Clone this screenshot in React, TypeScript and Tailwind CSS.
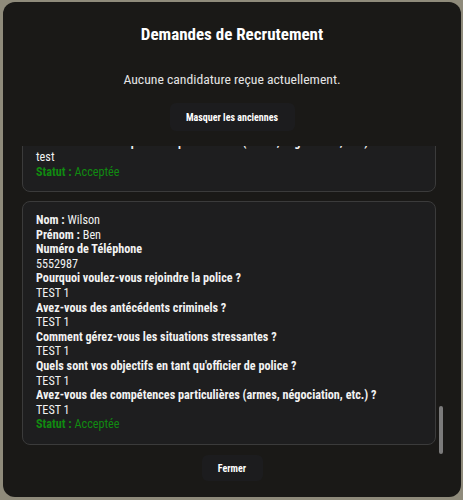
import React from "react";

interface Application {
  nom: string;
  prenom: string;
  telephone: string;
  answers: { question: string; answer: string }[];
  statut: string;
}

const applications: Application[] = [
  {
    nom: "test",
    prenom: "test",
    telephone: "555",
    answers: [
      { question: "Pourquoi voulez-vous rejoindre la police ?", answer: "test" },
      { question: "Avez-vous des antécédents criminels ?", answer: "test" },
      { question: "Comment gérez-vous les situations stressantes ?", answer: "test" },
      { question: "Quels sont vos objectifs en tant qu'officier de police ?", answer: "test" },
      { question: "Avez-vous des compétences particulières (armes, négociation, etc.) ?", answer: "test" },
    ],
    statut: "Acceptée",
  },
  {
    nom: "Wilson",
    prenom: "Ben",
    telephone: "5552987",
    answers: [
      { question: "Pourquoi voulez-vous rejoindre la police ?", answer: "TEST 1" },
      { question: "Avez-vous des antécédents criminels ?", answer: "TEST 1" },
      { question: "Comment gérez-vous les situations stressantes ?", answer: "TEST 1" },
      { question: "Quels sont vos objectifs en tant qu'officier de police ?", answer: "TEST 1" },
      { question: "Avez-vous des compétences particulières (armes, négociation, etc.) ?", answer: "TEST 1" },
    ],
    statut: "Acceptée",
  },
];

const ApplicationCard: React.FC<{ app: Application }> = ({ app }) => (
  <div className="shrink-0 rounded-lg border border-[#3b3b3b] bg-[#1e1e1f] px-[13px] pt-[11px] pb-[12px] text-[12.2px] leading-[14.6px] text-[#f2f2f2]">
    <p>
      <span className="font-bold">Nom :</span> {app.nom}
    </p>
    <p>
      <span className="font-bold">Prénom :</span> {app.prenom}
    </p>
    <p className="font-bold">Numéro de Téléphone</p>
    <p>{app.telephone}</p>
    {app.answers.map((a) => (
      <div key={a.question}>
        <p className="font-bold">{a.question}</p>
        <p>{a.answer}</p>
      </div>
    ))}
    <p className="text-[#118a11]">
      <span className="font-bold">Statut :</span> {app.statut}
    </p>
  </div>
);

export default function App() {
  return (
    <div
      className="h-[500px] w-[463px] bg-[#8f8b7b] p-[2px_2px_3px_3px] font-stretch-condensed"
      style={{ fontFamily: "Roboto, 'Liberation Sans', sans-serif" }}
    >
      <div className="flex h-full flex-col rounded-xl bg-[#1a1917] text-white">
        <h1 className="pt-[20px] text-center text-[17px] font-bold leading-[24px]">
          Demandes de Recrutement
        </h1>
        <p className="mt-[24px] text-center text-[13.7px] leading-[18px] text-[#e4e4e4]">
          Aucune candidature reçue actuellement.
        </p>
        <div className="mt-[15px] flex justify-center">
          <button className="h-[28px] w-[125px] rounded-md bg-[#1c1c1e] text-[10px] font-bold">
            Masquer les anciennes
          </button>
        </div>
        <div className="mt-[15px] flex h-[308px] gap-[3px] pl-[19px] pr-[18px]">
          <div className="flex flex-1 flex-col justify-end gap-[9px] overflow-hidden pb-[9px]">
            {applications.map((app, i) => (
              <ApplicationCard key={i} app={app} />
            ))}
          </div>
          <div className="flex w-[4px] flex-col justify-end">
            <div className="h-[48px] rounded-full bg-[#7b7b7b]" />
          </div>
        </div>
        <div className="mt-[1px] flex justify-center">
          <button className="h-[26px] w-[61px] rounded-md bg-[#1c1c1e] text-[10px] font-bold">
            Fermer
          </button>
        </div>
      </div>
    </div>
  );
}
